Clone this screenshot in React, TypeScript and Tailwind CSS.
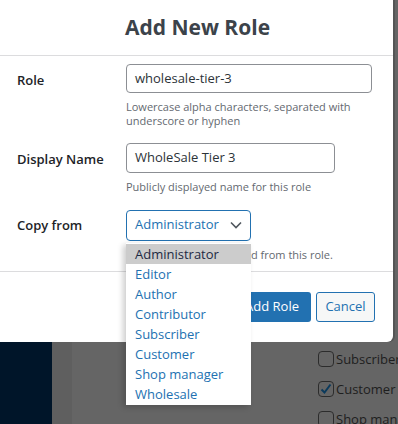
import React from 'react';

const roles = ['Administrator', 'Editor', 'Author', 'Contributor', 'Subscriber', 'Customer', 'Shop manager', 'Wholesale'];

const Field: React.FC<{ label: string; help: React.ReactNode; children: React.ReactNode }> = ({ label, help, children }) => (
  <div className="flex">
    <div className="w-[126px] shrink-0 pl-[17px] h-[30px] flex items-center pt-[3px] text-[13px] font-semibold text-[#1d2327]">
      {label}
    </div>
    <div className="flex flex-col">
      {children}
      <div className="mt-[7px] text-[11px] leading-[13.5px] text-[#646970]">{help}</div>
    </div>
  </div>
);

export default function App() {
  return (
    <div className="relative w-[398px] h-[424px] overflow-hidden bg-[#656565]" style={{ fontFamily: '"Open Sans", "Noto Sans", sans-serif' }}>
      {/* page behind the overlay */}
      <div className="flex h-full">
        <div className="w-[52px] shrink-0 bg-[#001529]" />
        <div className="w-[20px] shrink-0 bg-[#5f5f5f]" />
        <div className="flex-1 min-w-0 overflow-hidden flex flex-col pt-[350px] pl-[246px] gap-[12px] text-[13px] leading-[18px] text-[#1e1e1e]">
          <label className="flex items-center gap-[2px] whitespace-nowrap">
            <span className="w-[16px] h-[16px] shrink-0 rounded-[4px] border border-[#2c2c2c]" />
            Subscriber
          </label>
          <label className="flex items-center gap-[2px] whitespace-nowrap">
            <span className="w-[16px] h-[16px] shrink-0 rounded-[4px] border border-[#2c2c2c] flex items-center justify-center">
              <svg width="14" height="14" viewBox="0 0 14 14" fill="none">
                <path d="M2.5 7.5l3 3 6-8" stroke="#0b3a5c" strokeWidth="2" />
              </svg>
            </span>
            Customer
          </label>
          <label className="flex items-center gap-[2px] whitespace-nowrap">
            <span className="w-[16px] h-[16px] shrink-0 rounded-[4px] border border-[#2c2c2c]" />
            Shop manager
          </label>
        </div>
      </div>

      {/* modal */}
      <div className="absolute top-0 left-0 w-[393px] h-[342px] bg-white rounded-br-[6px] shadow-[2px_0_0_#555] flex flex-col">
        <div className="h-[56px] flex items-center justify-center border-b border-[#dcdcde]">
          <h1 className="text-[21px] font-bold text-[#3c434a] pl-[2px]">Add New Role</h1>
        </div>
        <div className="flex flex-col pt-[8px] gap-[16px]">
          <Field label="Role" help={<>Lowercase alpha characters, separated with<br />underscore or hyphen</>}>
            <div className="w-[246px] h-[29px] rounded-[4px] border border-[#8c8f94] px-[8px] flex items-center text-[13px] text-[#2c3338]">
              wholesale-tier-3
            </div>
          </Field>
          <Field label="Display Name" help="Publicly displayed name for this role">
            <div className="w-[209px] h-[30px] rounded-[4px] border border-[#8c8f94] px-[8px] flex items-center text-[13px] text-[#2c3338]">
              WholeSale Tier 3
            </div>
          </Field>
          <Field label="Copy from" help="Capabilities will be copied from this role.">
            <div className="w-[125px] h-[31px] rounded-[4px] border-[1.5px] border-[#2271b1] pl-[8px] pr-[8px] flex items-center justify-between text-[13px] text-[#2271b1]">
              Administrator
              <svg width="12" height="8" viewBox="0 0 12 8" fill="none">
                <path d="M1 1.5l5 5 5-5" stroke="#50575e" strokeWidth="1.6" />
              </svg>
            </div>
          </Field>
        </div>
        <div className="mt-[10px] border-t border-[#dcdcde] flex-1 flex justify-end items-start pt-[20px] pr-[18px] gap-[5px]">
          <button className="h-[30px] px-[12px] rounded-[3px] bg-[#2271b1] text-white text-[13px]">Add Role</button>
          <button className="h-[30px] w-[59px] rounded-[3px] border border-[#2271b1] bg-[#f6f7f7] text-[#2271b1] text-[13px]">Cancel</button>
        </div>
      </div>

      {/* open select list */}
      <ul className="absolute left-[126px] top-[243px] w-[125px] bg-white py-[1px] shadow-[-3px_2px_6px_rgba(0,0,0,0.2)] text-[13px] text-[#2271b1]">
        {roles.map((r, i) => (
          <li key={r} className={`h-[20px] leading-[20px] pl-[9px] ${i === 0 ? 'bg-[#cccccc] text-[#1d2a44]' : ''}`}>
            {r}
          </li>
        ))}
      </ul>
    </div>
  );
}
